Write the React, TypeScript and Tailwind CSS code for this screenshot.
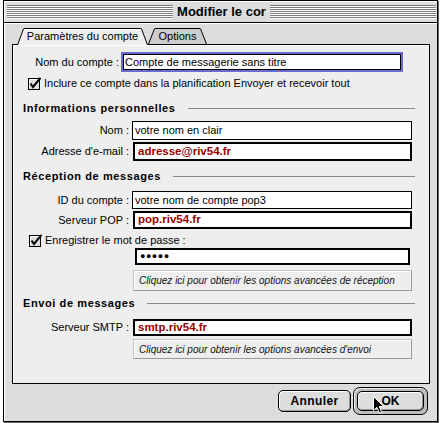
import React from 'react'

function Stripes() {
  return (
    <div className="flex-1 h-[14px] bg-[repeating-linear-gradient(to_bottom,#7b7b7b_0px,#7b7b7b_1px,#ffffff_1px,#ffffff_2px)]" />
  )
}

function Slant({ side, fill, h }: { side: 'l' | 'r'; fill: string; h: number }) {
  const pts = side === 'l' ? `0,${h} 7,0 7,${h}` : `0,0 7,${h} 0,${h}`
  const line = side === 'l' ? `M0.5 ${h} L6.6 0.5` : `M0.4 0.5 L6.5 ${h}`
  return (
    <svg width="7" height={h} className="block shrink-0">
      <polygon points={pts} fill={fill} />
      <path d={line} stroke="#000" strokeWidth="1" fill="none" />
    </svg>
  )
}

function Checkbox() {
  return (
    <svg width="14" height="13" className="block shrink-0">
      <rect x="0.5" y="1.5" width="11" height="11" fill="#dcdcdc" stroke="#000" />
      <path d="M1.5 2.5 H10.5 M1.5 2.5 V11.5" stroke="#fff" />
      <path d="M2.5 6.5 L5 10 L12.5 0.8" stroke="#000" strokeWidth="2" fill="none" />
    </svg>
  )
}

function Header({ label }: { label: string }) {
  return (
    <div className="flex items-center h-[13px] pl-[10px] pr-[14px]">
      <span className="font-bold text-[11px] leading-[13px] tracking-[0.6px]">{label}</span>
      <div className="flex-1 ml-[12px] h-px bg-[#8a8a8a]" />
    </div>
  )
}

function Row({
  label,
  labelW,
  value,
  red,
  mt,
  h,
  ml,
  w,
}: {
  label: string
  labelW: string
  value: string
  red?: boolean
  mt: string
  h: string
  ml: string
  w: string
}) {
  return (
    <div className={`flex items-center ${mt} ${h}`}>
      <div className={`${labelW} shrink-0 text-right text-[11px] leading-[13px]`}>{label}</div>
      {red ? (
        <div className={`${ml} ${w} h-full border-2 border-black bg-white flex items-center pl-[3px] text-[11.5px] font-bold text-[#990000]`}>
          {value}
        </div>
      ) : (
        <div className={`${ml} ${w} h-full border border-black bg-white flex items-center pl-[2px] text-[11px]`}>
          {value}
        </div>
      )}
    </div>
  )
}

function MoreBox({ text, h, mt }: { text: string; h: string; mt: string }) {
  return (
    <div
      className={`${mt} ${h} ml-[120px] w-[279px] border-t border-l border-[#c4c4c4] border-b border-r border-b-[#9a9a9a] border-r-[#9a9a9a] bg-[#eeeeee] shadow-[inset_1px_1px_0_#fff] flex items-center pl-[5px] text-[10px] italic text-[#111] whitespace-nowrap`}
    >
      {text}
    </div>
  )
}

export default function App() {
  return (
    <div className="relative w-[442px] h-[423px] bg-white overflow-hidden font-['Liberation_Sans',Arial,sans-serif] text-black">
      <div className="ml-[3px] w-[435px] h-[422px] border border-black bg-[#dddddd] flex flex-col shadow-[1px_1px_0_#666]">
        {/* title bar */}
        <div className="h-[22px] shrink-0 flex items-center pl-[3px] pr-[1px] border-b border-black shadow-[inset_1px_1px_0_#fff]">
          <Stripes />
          <div className="px-[4px] text-[13px] font-bold leading-[16px]">Modifier le cor</div>
          <Stripes />
        </div>

        {/* body */}
        <div className="flex-1 flex flex-col pl-[8px] pr-[7px] pt-[5px] shadow-[inset_1px_1px_0_#fff]">
          {/* tabs */}
          <div className="relative z-10 flex items-start h-[17px] -mb-px">
            <div className="ml-[5px] flex">
              <Slant side="l" fill="#eeeeee" h={17} />
              <div className="w-[117px] h-[17px] bg-[#eeeeee] border-t border-black shadow-[inset_0_1px_0_#fff] text-[11px] leading-[15px] text-center">
                Paramètres du compte
              </div>
              <Slant side="r" fill="#eeeeee" h={17} />
            </div>
            <div className="flex">
              <Slant side="l" fill="#cccccc" h={16} />
              <div className="w-[45px] h-[16px] bg-[#cccccc] border-t border-black text-[11px] leading-[15px] text-center">
                Options
              </div>
              <Slant side="r" fill="#cccccc" h={16} />
            </div>
          </div>

          {/* panel */}
          <div className="relative z-0 h-[340px] border border-black bg-[#eeeeee] shadow-[inset_1px_1px_0_#fff] flex flex-col">
            <div className="flex items-center mt-[7px] h-[20px]">
              <div className="w-[106px] shrink-0 text-right text-[11px] leading-[13px]">Nom du compte :</div>
              <div className="ml-[4px] w-[278px] h-[16px] border border-black bg-white shadow-[0_0_0_2px_#6a6ad0] flex items-center pl-[1px] text-[11px]">
                Compte de messagerie sans titre
              </div>
            </div>

            <div className="flex items-center mt-[5px] h-[13px] pl-[15px]">
              <Checkbox />
              <span className="ml-[2px] text-[11px] leading-[13px]">
                Inclure ce compte dans la planification Envoyer et recevoir tout
              </span>
            </div>

            <div className="mt-[12px]">
              <Header label="Informations personnelles" />
            </div>

            <Row label="Nom :" labelW="w-[116px]" value="votre nom en clair" mt="mt-[6px]" h="h-[19px]" ml="ml-[3px]" w="w-[280px]" />
            <Row label="Adresse d'e-mail :" labelW="w-[116px]" value="adresse@riv54.fr" red mt="mt-[2px]" h="h-[19px]" ml="ml-[4px]" w="w-[279px]" />

            <div className="mt-[9px]">
              <Header label="Réception de messages" />
            </div>

            <Row label="ID du compte :" labelW="w-[116px]" value="votre nom de compte pop3" mt="mt-[8px]" h="h-[18px]" ml="ml-[3px]" w="w-[280px]" />
            <Row label="Serveur POP :" labelW="w-[116px]" value="pop.riv54.fr" red mt="mt-[2px]" h="h-[18px]" ml="ml-[4px]" w="w-[279px]" />

            <div className="flex items-center mt-[5px] h-[12px] pl-[16px]">
              <Checkbox />
              <span className="ml-[2px] text-[11px] leading-[13px]">Enregistrer le mot de passe :</span>
            </div>

            <div className="mt-[2px] h-[17px] ml-[122px] w-[275px] border-2 border-black bg-white flex items-center pl-[3px] text-[9px] font-bold tracking-[0.5px]">
              ●●●●●
            </div>

            <MoreBox text="Cliquez ici pour obtenir les options avancées de réception" h="h-[21px]" mt="mt-[5px]" />

            <div className="mt-[6px]">
              <Header label="Envoi de messages" />
            </div>

            <Row label="Serveur SMTP :" labelW="w-[116px]" value="smtp.riv54.fr" red mt="mt-[9px]" h="h-[17px]" ml="ml-[4px]" w="w-[279px]" />

            <MoreBox text="Cliquez ici pour obtenir les options avancées d'envoi" h="h-[20px]" mt="mt-[3px]" />
          </div>

          {/* buttons */}
          <div className="flex justify-end items-center mt-[3px] h-[28px] pr-[2px] gap-[2px]">
            <div className="w-[73px] h-[22px] rounded-[5px] border border-black bg-[#dddddd] shadow-[inset_1px_1px_0_#fff,inset_-1px_-1px_0_#999] flex items-center justify-center text-[12px] font-bold tracking-[0.4px]">
              Annuler
            </div>
            <div className="w-[75px] h-[28px] rounded-[7px] border border-black bg-[#bdbdbd] p-[3px] shadow-[inset_1px_1px_0_#eee]">
              <div className="h-full rounded-[5px] border border-black bg-[#dddddd] shadow-[inset_1px_1px_0_#fff,inset_-1px_-1px_0_#999] flex items-center justify-center text-[12px] font-bold">
                OK
              </div>
            </div>
          </div>
        </div>
      </div>

      {/* mouse pointer */}
      <svg width="12" height="18" className="absolute left-[373px] top-[396px]">
        <path d="M0.5 0.5 L0.5 14.5 L3.8 11.3 L6.3 16.8 L8.6 15.8 L6.2 10.5 L10.8 10.5 Z" fill="#000" stroke="#fff" strokeWidth="1" />
      </svg>
    </div>
  )
}
